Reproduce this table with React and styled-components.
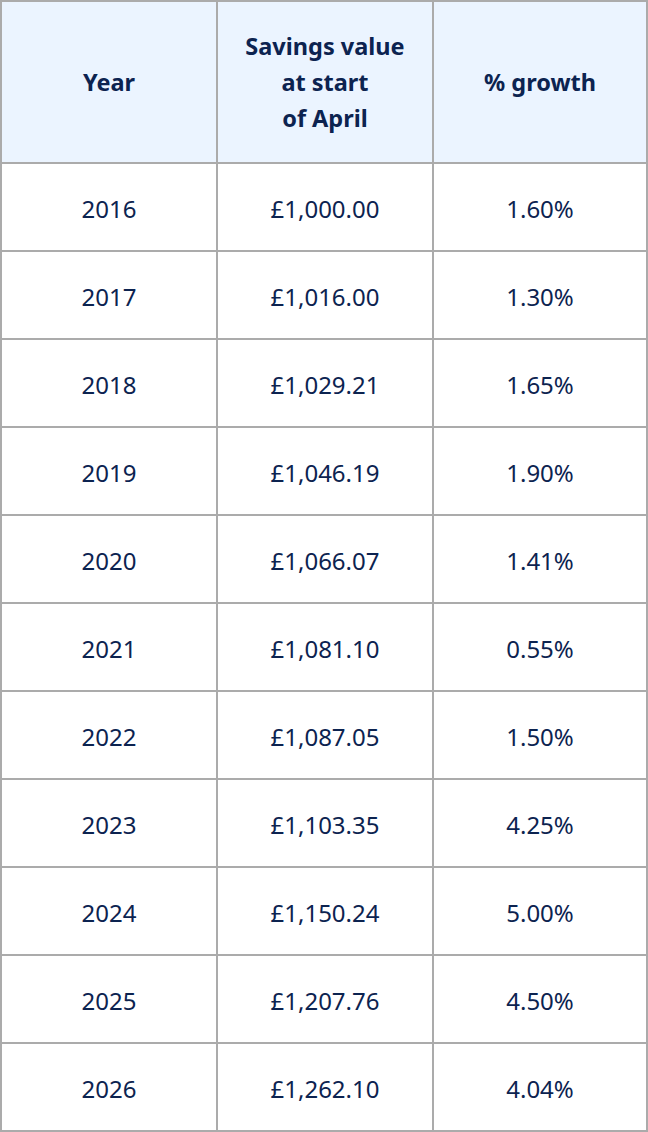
import React from 'react';
import styled, { createGlobalStyle } from 'styled-components';

const rows = [
  ['2016', '£1,000.00', '1.60%'],
  ['2017', '£1,016.00', '1.30%'],
  ['2018', '£1,029.21', '1.65%'],
  ['2019', '£1,046.19', '1.90%'],
  ['2020', '£1,066.07', '1.41%'],
  ['2021', '£1,081.10', '0.55%'],
  ['2022', '£1,087.05', '1.50%'],
  ['2023', '£1,103.35', '4.25%'],
  ['2024', '£1,150.24', '5.00%'],
  ['2025', '£1,207.76', '4.50%'],
  ['2026', '£1,262.10', '4.04%'],
];

const App = () => {
  return (
    <>
      <GlobalStyle />
      <Table role='table'>
        <HeadCell>Year</HeadCell>
        <HeadCell>
          Savings value
          <br />
          at start
          <br />
          of April
        </HeadCell>
        <HeadCell>% growth</HeadCell>
        {rows.map((row) =>
          row.map((value, i) => <Cell key={row[0] + i}>{value}</Cell>)
        )}
      </Table>
    </>
  );
};

const GlobalStyle = createGlobalStyle`
  body {
    margin: 0;
    background: #fff;
    font-family: 'Noto Sans', 'Open Sans', sans-serif;
  }
`;

const Table = styled.div`
  display: grid;
  grid-template-columns: 214px 214px 212px;
  grid-template-rows: 160px;
  grid-auto-rows: 86px;
  gap: 2px;
  padding: 2px;
  width: 648px;
  box-sizing: border-box;
  background: #ababab;
  color: #0c2350;
`;

const Cell = styled.div`
  display: flex;
  align-items: center;
  justify-content: center;
  padding-top: 4px;
  box-sizing: border-box;
  text-align: center;
  background: #fff;
  font-size: 24px;
  line-height: 36px;
`;

const HeadCell = styled(Cell)`
  padding-top: 0;
  background: #ebf4ff;
  font-weight: 700;
  font-size: 23.5px;
`;

export default App;
